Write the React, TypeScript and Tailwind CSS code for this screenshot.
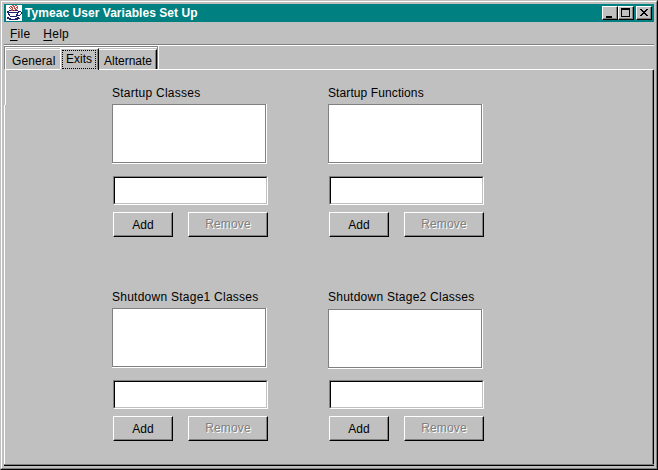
import React from "react";

const font = "font-['Liberation_Sans',Arial,sans-serif]";
const raised =
  "bg-[#c0c0c0] border border-t-white border-l-white border-r-black border-b-black shadow-[inset_-1px_-1px_0_#808080]";

const CUP = [
  "......rr.rr.....",
  "....rr.rr..r....",
  "...r.rr.r.rr....",
  "....r.r.rr.r....",
  ".....rr..rr.....",
  "...bbrrbrbbb....",
  ".bb.........bbb.",
  ".bbbbbbbbbbbb..b",
  "..b........b...b",
  "..bb......bb..b.",
  "...b......bbbb..",
  "....bbbbbbb.....",
  ".bb........bb...",
  ".bbbb....bbbbb..",
  "...bbbbbbbbb....",
  "................",
];

function JavaCup() {
  return (
    <svg className="ml-0.5 h-4 w-4 shrink-0 bg-white" viewBox="0 0 16 16" shapeRendering="crispEdges">
      {CUP.flatMap((row, y) =>
        row.split("").map((c, x) =>
          c === "." ? null : (
            <rect key={`${x}-${y}`} x={x} y={y} width="1" height="1" fill={c === "r" ? "#c05050" : "#202070"} />
          ),
        ),
      )}
    </svg>
  );
}

function WinButton({ children }: { children: React.ReactNode }) {
  return (
    <button className={`h-3.5 w-4 shrink-0 ${raised}`}>
      <svg className="block h-3 w-3.5" viewBox="1 1 14 12" shapeRendering="crispEdges">
        {children}
      </svg>
    </button>
  );
}

function Group({ title, low, tight }: { title: string; low?: boolean; tight?: boolean }) {
  return (
    <section className="flex h-[152px] w-[156px] flex-col">
      <h2
        className={`h-[19px] pt-px text-[12px] leading-[15px] whitespace-nowrap ${tight ? "tracking-[0.1px]" : "tracking-[0.25px]"}`}
      >
        {title}
      </h2>
      <div
        className={`h-[60px] w-[155px] border-r border-b border-white bg-[#808080] p-px ${low ? "translate-y-px" : ""}`}
      >
        <div className="h-full w-full bg-white" />
      </div>
      <div className="mt-3 ml-px h-[29px] w-[155px] border border-t-[#808080] border-r-white border-b-white border-l-[#808080]">
        <input className="block h-full w-full border border-t-black border-r-[#c0c0c0] border-b-[#c0c0c0] border-l-black bg-white outline-none" />
      </div>
      <div className="mt-[7px] ml-px flex justify-between text-[12px]">
        <button className={`h-[25px] w-[60px] ${raised}`}>Add</button>
        <button
          disabled
          className={`h-[25px] w-20 pb-0.5 tracking-[0.15px] text-[#808080] [text-shadow:1px_1px_0_white] ${raised}`}
        >
          Remove
        </button>
      </div>
    </section>
  );
}

export default function App() {
  return (
    <div
      className={`h-[470px] w-[658px] overflow-hidden border border-t-[#c0c0c0] border-r-black border-b-black border-l-[#c0c0c0] bg-[#c0c0c0] text-black ${font}`}
    >
      <div className="flex h-full flex-col border border-t-white border-r-[#808080] border-b-[#808080] border-l-white p-0.5">
        <header className="flex h-[18px] shrink-0 items-center bg-[#008080] pr-0.5">
          <JavaCup />
          <h1 className="ml-[3px] grow text-[12px] leading-[18px] font-bold tracking-[0.05px] whitespace-nowrap text-white">
            Tymeac User Variables Set Up
          </h1>
          <WinButton>
            <path d="M4 10h6v2H4z" />
          </WinButton>
          <WinButton>
            <path fillRule="evenodd" d="M3 2h9v9H3zM4 4h7v6H4z" />
          </WinButton>
          <div className="w-0.5" />
          <WinButton>
            <path d="M4 3h2v1H4zM10 3h2v1h-2zM5 4h2v1H5zM9 4h2v1H9zM6 5h4v1H6zM7 6h2v1H7zM6 7h4v1H6zM5 8h2v1H5zM9 8h2v1H9zM4 9h2v1H4zM10 9h2v1h-2z" />
          </WinButton>
        </header>
        <nav className="flex h-[22px] shrink-0 gap-[13px] pl-[6px] text-[12px] leading-6 tracking-[0.25px]">
          <span>
            <u className="underline-offset-2">F</u>ile
          </span>
          <span>
            <u className="underline-offset-2">H</u>elp
          </span>
        </nav>
        <div className="h-0.5 shrink-0 border-t border-b border-t-[#808080] border-b-white" />
        <div className="flex h-[23px] shrink-0">
          <div className="flex w-[154px] border-t border-r border-l border-[#808080]">
            <div className="flex w-full border-t border-l border-white">
              <div className="mt-px flex h-5 w-[54px] border-t border-white pl-[6px] text-[12px] leading-[23px] tracking-[0.1px]">
                General
              </div>
              <div className="flex h-[21px] w-[39px] shrink-0 border-t border-r border-l border-t-white border-r-black border-l-white text-[12px]">
                <div className="flex h-full w-full border-r border-[#808080] pt-px pl-px">
                  <div className="flex h-[19px] w-[34px] items-center justify-center border border-dotted border-black pb-px leading-none">
                    Exits
                  </div>
                </div>
              </div>
              <div className="mt-px flex h-5 w-[58px] shrink-0 border-t border-r border-t-white border-r-black text-[12px] leading-[23px]">
                <div className="w-full border-r border-[#808080] pl-[5px]">Alternate</div>
              </div>
            </div>
          </div>
          <div className="w-px bg-white" />
        </div>
        <main className="flex h-[397px] shrink-0 flex-col">
          <div className="flex h-px shrink-0">
            <div className="ml-px w-[55px] bg-white" />
            <div className="w-[38px]" />
            <div className="w-px bg-black" />
            <div className="mr-px grow bg-white" />
          </div>
          <div className="flex h-[394px] shrink-0">
            <div className="flex w-0.5 shrink-0 flex-col">
              <div className="h-[35px] border-r border-white" />
              <div className="w-px grow bg-white" />
            </div>
            <div className="grid grow grid-cols-[216px_156px] content-start gap-y-[52px] border-r border-[#808080] pt-[15px] pl-[106px]">
              <Group title="Startup Classes" />
              <Group title="Startup Functions" tight />
              <Group title="Shutdown Stage1 Classes" />
              <Group title="Shutdown Stage2 Classes" low />
            </div>
            <div className="w-px bg-black" />
          </div>
          <div className="h-0.5 shrink-0 border-t border-b border-t-[#808080] border-b-black" />
        </main>
      </div>
    </div>
  );
}
